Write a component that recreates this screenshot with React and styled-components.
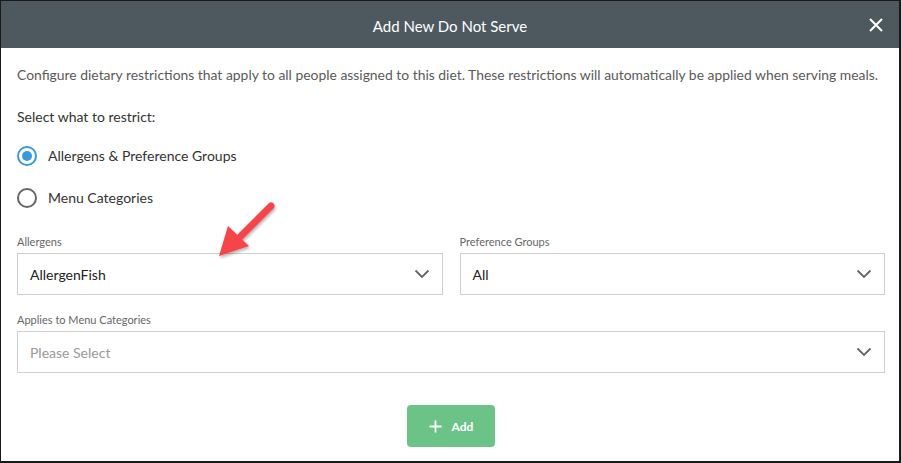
import React from "react";
import styled, { createGlobalStyle } from "styled-components";

const Global = createGlobalStyle`
  html, body { margin: 0; padding: 0; background: #fff; }
  body { font-family: Lato, "Open Sans", Arial, sans-serif; }
  * { box-sizing: border-box; }
`;

const Frame = styled.div`
  width: 901px;
  height: 463px;
  border: 1px solid #1a1a1a;
  border-right-width: 2px;
  border-bottom-width: 2px;
  position: relative;
  display: flex;
  flex-direction: column;
  background: #fff;
  overflow: hidden;
`;

const Header = styled.div`
  height: 47px;
  background: #4d585f;
  color: #fff;
  display: flex;
  align-items: center;
  justify-content: center;
  position: relative;
  font-size: 15px;
  padding-top: 2px;
`;

const Close = styled.button`
  position: absolute;
  right: 12px;
  top: 13px;
  width: 22px;
  height: 22px;
  border: 0;
  background: transparent;
  padding: 0;
  display: flex;
  align-items: center;
  justify-content: center;
`;

const Body = styled.div`
  padding: 18px 14px 0 16px;
  display: flex;
  flex-direction: column;
`;

const Desc = styled.p`
  margin: 0;
  font-size: 13.9px;
  color: #5a5a5a;
  line-height: 18px;
`;

const Prompt = styled.p`
  margin: 24px 0 0 0;
  font-size: 14px;
  color: #333;
  line-height: 18px;
`;

const RadioGroup = styled.div`
  display: flex;
  flex-direction: column;
  gap: 20px;
  margin-top: 19px;
`;

const RadioRow = styled.label`
  display: flex;
  align-items: center;
  gap: 11px;
  font-size: 14px;
  color: #333;
  line-height: 22px;
`;

const RadioCircle = styled.span`
  width: 20px;
  height: 20px;
  border-radius: 50%;
  border: 2px solid ${(p) => (p.$checked ? "#3a9ad9" : "#666")};
  display: flex;
  align-items: center;
  justify-content: center;
  &::after {
    content: "";
    width: 10px;
    height: 10px;
    border-radius: 50%;
    background: ${(p) => (p.$checked ? "#3a9ad9" : "transparent")};
  }
`;

const Grid = styled.div`
  display: grid;
  grid-template-columns: 1fr 1fr;
  column-gap: 17px;
  row-gap: 18px;
  margin-top: 26px;
`;

const Field = styled.div`
  display: flex;
  flex-direction: column;
  gap: 4px;
  grid-column: ${(p) => (p.$full ? "1 / -1" : "auto")};
`;

const Label = styled.span`
  font-size: 11px;
  color: #666;
  line-height: 14px;
`;

const Select = styled.div`
  height: 42px;
  border: 1px solid #cfcfcf;
  display: flex;
  align-items: center;
  justify-content: space-between;
  padding: 0 12px 0 12px;
  font-size: 14px;
  color: ${(p) => (p.$placeholder ? "#999" : "#222")};
`;

const Footer = styled.div`
  display: flex;
  justify-content: center;
  margin-top: 32px;
`;

const AddButton = styled.button`
  width: 88px;
  height: 42px;
  border: 0;
  border-radius: 4px;
  background: #6cc387;
  color: #fff;
  font-family: Lato, Arial, sans-serif;
  font-weight: 700;
  font-size: 12px;
  display: flex;
  align-items: center;
  justify-content: center;
  gap: 10px;
`;

const Arrow = styled.svg`
  position: absolute;
  left: 205px;
  top: 195px;
  pointer-events: none;
`;

const Chevron = () => (
  <svg width="16" height="10" viewBox="0 0 16 10">
    <path d="M1.5 1.5 L8 8 L14.5 1.5" fill="none" stroke="#666" strokeWidth="1.8" />
  </svg>
);

export default function App() {
  return (
    <>
      <Global />
      <Frame>
        <Header>
          Add New Do Not Serve
          <Close aria-label="close">
            <svg width="16" height="16" viewBox="0 0 16 16">
              <path d="M2 2 L14 14 M14 2 L2 14" stroke="#fff" strokeWidth="2" />
            </svg>
          </Close>
        </Header>
        <Body>
          <Desc>
            Configure dietary restrictions that apply to all people assigned to this diet. These restrictions will automatically be applied when serving meals.
          </Desc>
          <Prompt>Select what to restrict:</Prompt>
          <RadioGroup>
            <RadioRow>
              <RadioCircle $checked />
              Allergens &amp; Preference Groups
            </RadioRow>
            <RadioRow>
              <RadioCircle />
              Menu Categories
            </RadioRow>
          </RadioGroup>
          <Grid>
            <Field>
              <Label>Allergens</Label>
              <Select>
                AllergenFish
                <Chevron />
              </Select>
            </Field>
            <Field>
              <Label>Preference Groups</Label>
              <Select>
                All
                <Chevron />
              </Select>
            </Field>
            <Field $full>
              <Label>Applies to Menu Categories</Label>
              <Select $placeholder>
                Please Select
                <Chevron />
              </Select>
            </Field>
          </Grid>
          <Footer>
            <AddButton>
              <svg width="13" height="13" viewBox="0 0 13 13">
                <path d="M6.5 0.5 V12.5 M0.5 6.5 H12.5" stroke="#fff" strokeWidth="1.8" />
              </svg>
              Add
            </AddButton>
          </Footer>
        </Body>
        <Arrow width="80" height="70" viewBox="0 0 80 70">
          <defs>
            <filter id="sh" x="-20%" y="-20%" width="140%" height="140%">
              <feDropShadow dx="1" dy="2" stdDeviation="1.5" floodColor="#000" floodOpacity="0.3" />
            </filter>
          </defs>
          <g filter="url(#sh)">
            <path d="M65 10 L30 45" stroke="#f5454a" strokeWidth="7" strokeLinecap="round" />
            <path d="M13 60 L22 30 L43 50 Z" fill="#f5454a" />
          </g>
        </Arrow>
      </Frame>
    </>
  );
}
